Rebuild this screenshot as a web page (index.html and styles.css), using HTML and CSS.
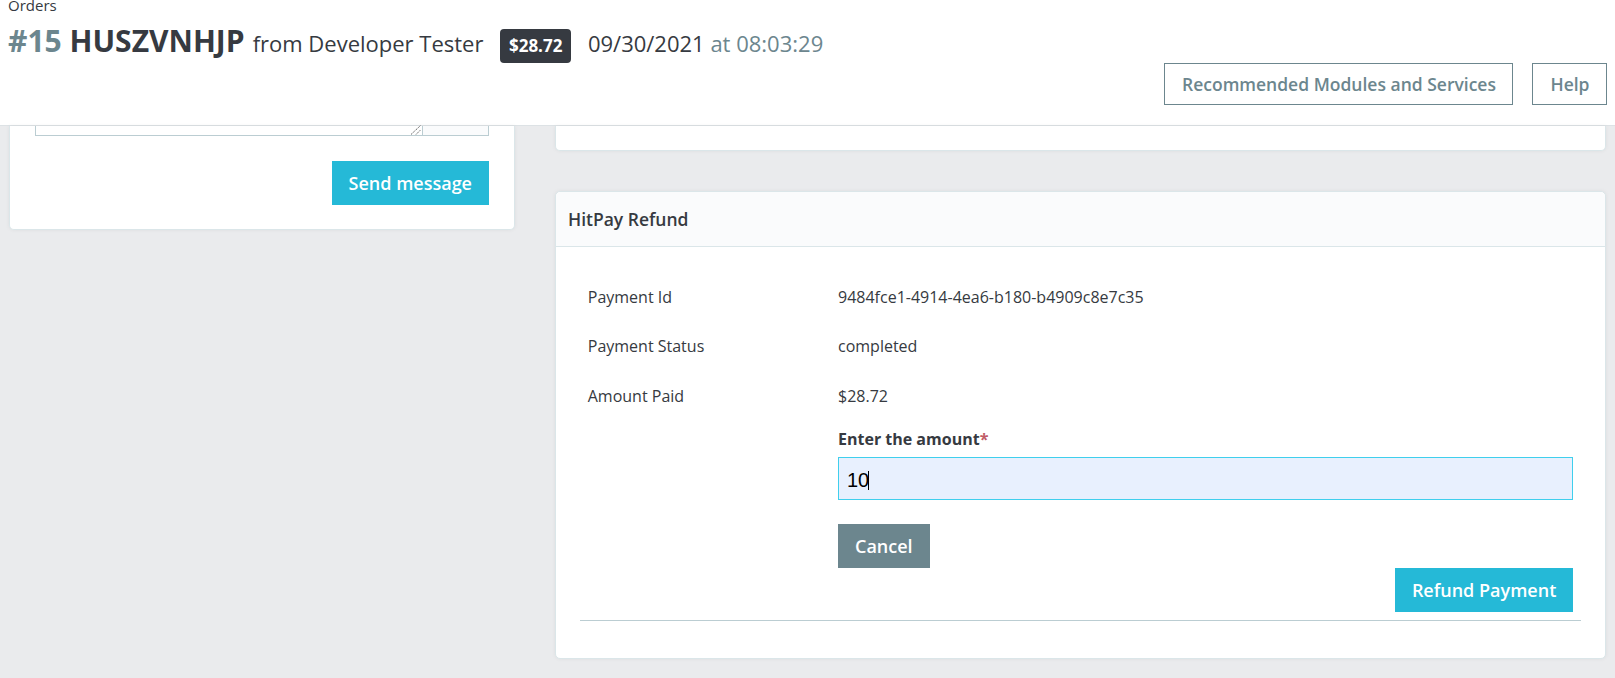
FILE: index.html
```html
<!DOCTYPE html>
<html lang="en">
<head>
<meta charset="utf-8">
<title>Order #15 HUSZVNHJP</title>
<link rel="stylesheet" href="styles.css">
</head>
<body>
<header class="toolbar">
  <div class="crumb">Orders</div>
  <div class="title-row">
    <h1 class="title"><span class="num">#15</span> HUSZVNHJP</h1>
    <span class="from">from Developer Tester</span>
    <span class="badge">$28.72</span>
    <span class="date">09/30/2021 <span class="time">at 08:03:29</span></span>
  </div>
  <div class="actions">
    <a class="btn-outline" href="#">Recommended Modules and Services</a>
    <a class="btn-outline" href="#">Help</a>
  </div>
</header>
<main class="content">
  <div class="col-left">
    <section class="card card-msg">
      <div class="msg-body">
        <div class="msg-group">
          <div class="ta">
            <svg class="grip" width="11" height="10" viewBox="0 0 11 10"><path d="M1 9.5 L10.5 0.5 M6 9.5 L10.5 5" stroke="#666" stroke-width="1" stroke-dasharray="1.5 0.8" fill="none"/></svg>
          </div>
          <div class="addon"></div>
        </div>
        <div class="msg-actions"><button class="btn btn-primary">Send message</button></div>
      </div>
    </section>
  </div>
  <div class="col-right">
    <section class="card card-top"></section>
    <section class="card card-refund">
      <div class="card-header">HitPay Refund</div>
      <div class="refund-body">
        <div class="row"><div class="lbl">Payment Id</div><div class="val">9484fce1-4914-4ea6-b180-b4909c8e7c35</div></div>
        <div class="row"><div class="lbl">Payment Status</div><div class="val">completed</div></div>
        <div class="row"><div class="lbl">Amount Paid</div><div class="val">$28.72</div></div>
        <div class="row row-form">
          <div class="lbl"></div>
          <div class="val field">
            <div class="field-label">Enter the amount<span class="req">*</span></div>
            <div class="input">10<span class="caret"></span></div>
            <button class="btn btn-secondary">Cancel</button>
            <button class="btn btn-primary btn-refund">Refund Payment</button>
          </div>
        </div>
        <hr class="sep">
      </div>
    </section>
  </div>
</main>
</body>
</html>
```
FILE: styles.css
```css
html, body {
  margin: 0;
  padding: 0;
}
body {
  background: #eaebed;
  font-family: "Open Sans", "DejaVu Sans", sans-serif;
  color: #363a41;
  height: 678px;
  overflow: hidden;
}

/* ---------- header ---------- */
.toolbar {
  background: #fff;
  border-bottom: 1px solid #dde2e5;
  height: 125px;
  padding: 0 8px;
  display: flex;
  flex-direction: column;
}
.crumb {
  font-size: 15px;
  line-height: 10px;
  height: 10px;
}
.title-row {
  display: flex;
  align-items: baseline;
  height: 42px;
  margin-top: 11px;
  white-space: nowrap;
}
.title {
  margin: 0;
  font-size: 30px;
  font-weight: 700;
  line-height: 40px;
}
.num {
  color: #6c868e;
}
.from {
  font-size: 22px;
  line-height: 30px;
  margin-left: 8px;
}
.badge {
  margin-left: 17px;
  background: #363a41;
  color: #fff;
  font-weight: 700;
  font-size: 17px;
  line-height: 22px;
  padding: 6px 8.5px;
  border-radius: 4px;
}
.date {
  margin-left: 17px;
  font-size: 22px;
  line-height: 30px;
}
.time {
  color: #6c868e;
}
.actions {
  display: flex;
  justify-content: flex-end;
  gap: 19px;
}
.btn-outline {
  display: flex;
  align-items: center;
  height: 42px;
  box-sizing: border-box;
  padding: 0 16.5px 0 17px;
  border: 1px solid #6c868e;
  color: #6c868e;
  font-size: 17.5px;
  font-weight: 600;
  text-decoration: none;
}

/* ---------- layout ---------- */
.content {
  display: grid;
  grid-template-columns: 506px 1fr;
  column-gap: 40px;
  padding: 0 9px;
  align-items: start;
}
.card {
  background: #fff;
  border: 1px solid #dbe6e9;
  border-radius: 5px;
  box-shadow: 0 0 4px 0 rgba(0, 0, 0, .06);
}

/* ---------- message card ---------- */
.card-msg {
  border-top: 0;
  border-radius: 0 0 5px 5px;
}
.msg-body {
  padding: 0 25px 24px;
}
.msg-group {
  display: flex;
}
.ta {
  flex: 1;
  height: 9px;
  border: 1px solid #bbcdd2;
  border-top: 0;
  display: flex;
  justify-content: flex-end;
  align-items: flex-end;
}
.grip {
  display: block;
  margin: 0 1px 0 0;
}
.addon {
  width: 65px;
  height: 9px;
  background: #fafbfc;
  border: 1px solid #bbcdd2;
  border-top: 0;
  border-left: 0;
}
.msg-actions {
  display: flex;
  justify-content: flex-end;
  margin-top: 25px;
}

/* ---------- buttons ---------- */
.btn {
  height: 44px;
  padding: 0 17px;
  border: 0;
  border-radius: 0;
  font-family: "Open Sans", "DejaVu Sans", sans-serif;
  font-size: 18px;
  font-weight: 600;
  color: #fff;
  cursor: pointer;
}
.btn-primary {
  background: #25b9d7;
}
.btn-secondary {
  background: #6c868e;
}

/* ---------- right column ---------- */
.card-top {
  height: 24px;
  border-top: 0;
  border-radius: 0 0 5px 5px;
}
.card-refund {
  margin-top: 40px;
}
.card-header {
  height: 54px;
  display: flex;
  align-items: center;
  padding: 0 12px;
  background: #fafbfc;
  border-bottom: 1px solid #dbe6e9;
  border-radius: 5px 5px 0 0;
  font-size: 17.5px;
  font-weight: 600;
  box-sizing: content-box;
}
.refund-body {
  padding: 37.5px 24px 37px;
}
.row {
  display: grid;
  grid-template-columns: 1fr 3fr;
  font-size: 16px;
  line-height: 24px;
}
.row + .row {
  margin-top: 25.5px;
}
.row.row-form {
  margin-top: 21px;
}
.lbl, .val {
  padding: 0 7.75px;
}
.field {
  display: flex;
  flex-direction: column;
}
.field-label {
  font-size: 16px;
  font-weight: 700;
  line-height: 20px;
}
.req {
  color: #c05c67;
}
.input {
  margin-top: 8.5px;
  height: 43px;
  box-sizing: border-box;
  border: 1px solid #40cfed;
  background: #e8f0fe;
  padding: 4px 0 0 8px;
  display: flex;
  align-items: center;
  font-family: "Liberation Sans", Arial, sans-serif;
  font-size: 20px;
  line-height: 23px;
  color: #000;
}
.caret {
  display: inline-block;
  width: 1px;
  height: 19px;
  background: #000;
  margin-left: -1px;
  align-self: center;
}
.field .btn-secondary {
  align-self: flex-start;
  margin-top: 24px;
}
.btn-refund {
  align-self: flex-end;
}
.sep {
  margin: 8px 0 0;
  border: 0;
  border-top: 1px solid #bbcdd2;
  height: 0;
}
```
